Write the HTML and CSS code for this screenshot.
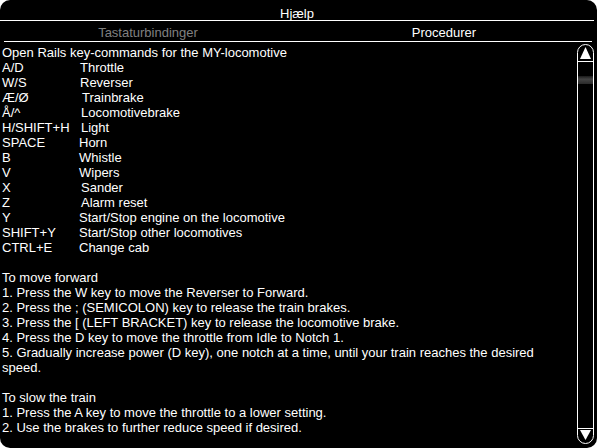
FILE: index.html
```html
<!DOCTYPE html>
<html lang="da">
<head>
  <meta charset="UTF-8">
  <title>Hjælp</title>
  <link rel="stylesheet" href="styles.css">
</head>
<body>
  <div class="window">
    <div class="title">Hjælp</div>
    <div class="tabs">
      <div class="tab">Tastaturbindinger</div>
      <div class="tab active">Procedurer</div>
    </div>
    <div class="content">
      <div class="text">
        <div class="line">Open Rails key-commands for the MY-locomotive</div>
        <div class="row"><span class="key">A/D</span><span class="desc p1">Throttle</span></div>
        <div class="row"><span class="key">W/S</span><span class="desc p1">Reverser</span></div>
        <div class="row"><span class="key">Æ/Ø</span><span class="desc p3">Trainbrake</span></div>
        <div class="row"><span class="key">Å/^</span><span class="desc p2">Locomotivebrake</span></div>
        <div class="row"><span class="key">H/SHIFT+H</span><span class="desc p2">Light</span></div>
        <div class="row"><span class="key">SPACE</span><span class="desc">Horn</span></div>
        <div class="row"><span class="key">B</span><span class="desc">Whistle</span></div>
        <div class="row"><span class="key">V</span><span class="desc">Wipers</span></div>
        <div class="row"><span class="key">X</span><span class="desc p2">Sander</span></div>
        <div class="row"><span class="key">Z</span><span class="desc p2">Alarm reset</span></div>
        <div class="row"><span class="key">Y</span><span class="desc">Start/Stop engine on the locomotive</span></div>
        <div class="row"><span class="key">SHIFT+Y</span><span class="desc">Start/Stop other locomotives</span></div>
        <div class="row"><span class="key">CTRL+E</span><span class="desc">Change cab</span></div>

        <div class="block">
          <div class="line">To move forward</div>
          <div class="line">1. Press the W key to move the Reverser to Forward.</div>
          <div class="line">2. Press the ; (SEMICOLON) key to release the train brakes.</div>
          <div class="line">3. Press the [ (LEFT BRACKET) key to release the locomotive brake.</div>
          <div class="line">4. Press the D key to move the throttle from Idle to Notch 1.</div>
          <div class="line">5. Gradually increase power (D key), one notch at a time, until your train reaches the desired<br>speed.</div>
        </div>

        <div class="block">
          <div class="line">To slow the train</div>
          <div class="line">1. Press the A key to move the throttle to a lower setting.</div>
          <div class="line">2. Use the brakes to further reduce speed if desired.</div>
        </div>
      </div>

      <div class="scrollbar">
        <svg width="17" height="400" viewBox="0 0 17 400">
          <defs>
            <linearGradient id="thumb" x1="0" y1="0" x2="0" y2="1">
              <stop offset="0" stop-color="#1a1a1a"/>
              <stop offset="0.4" stop-color="#444"/>
              <stop offset="1" stop-color="#2a2a2a"/>
            </linearGradient>
          </defs>
          <rect x="0.5" y="0.5" width="16" height="399" rx="8" ry="8" fill="none" stroke="#fff"/>
          <line x1="1" y1="17.5" x2="16" y2="17.5" stroke="#fff"/>
          <polygon points="8.5,3 3,15 14,15" fill="#fff"/>
          <rect x="1" y="32" width="15" height="8" fill="url(#thumb)"/>
          <line x1="1" y1="384.5" x2="16" y2="384.5" stroke="#fff"/>
          <polygon points="3,386 14,386 8.5,396" fill="#fff"/>
        </svg>
      </div>
    </div>
  </div>
</body>
</html>
```

FILE: styles.css
```css
body {
  margin: 0;
  background-color: #fff;
}

.window {
  width: 597px;
  height: 448px;
  background-color: #000;
  color: #fff;
  border-radius: 10px;
  overflow: hidden;
  font-family: "Liberation Sans", Arial, sans-serif;
  font-size: 13px;
  line-height: 15px;
}

.title {
  height: 21px;
  box-sizing: border-box;
  padding-top: 6px;
  margin-right: 3px;
  text-align: center;
  border-bottom: 1px solid #fff;
}

.tabs {
  display: flex;
  height: 21px;
  box-sizing: border-box;
  padding-top: 4px;
  margin-left: 4px;
  margin-right: 5px;
  border-bottom: 1px solid #fff;
}

.tab {
  flex: 1;
  text-align: center;
  color: #808080;
}

.tab:first-child {
  margin-left: -4px;
}

.tab.active {
  color: #fff;
}

.content {
  display: flex;
  padding-top: 2px;
}

.text {
  flex: 1;
  padding-left: 2px;
  padding-top: 1px;
}

.row {
  display: flex;
}

.key {
  width: 77px;
}

.p1 {
  padding-left: 1px;
}

.p2 {
  padding-left: 2px;
}

.p3 {
  padding-left: 3px;
}

.block {
  margin-top: 15px;
}

.scrollbar {
  width: 17px;
  height: 400px;
  margin-right: 3px;
}

.scrollbar svg {
  display: block;
}
```
